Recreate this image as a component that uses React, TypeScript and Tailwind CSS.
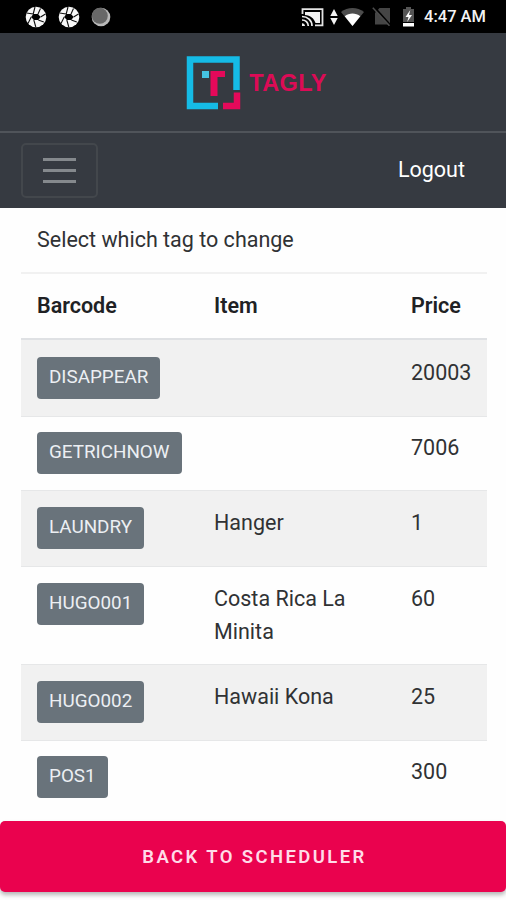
import { clsx } from "clsx";

type Tag = {
    barcode: string;
    item: string;
    price: string;
    height: string;
    pad: string;
};

const tags: Tag[] = [
    { barcode: "DISAPPEAR", item: "", price: "20003", height: "h-[77px]", pad: "pt-[16px]" },
    { barcode: "GETRICHNOW", item: "", price: "7006", height: "h-[74px]", pad: "pt-[14px]" },
    { barcode: "LAUNDRY", item: "Hanger", price: "1", height: "h-[76px]", pad: "pt-[15px]" },
    { barcode: "HUGO001", item: "Costa Rica La Minita", price: "60", height: "h-[98px]", pad: "pt-[15px]" },
    { barcode: "HUGO002", item: "Hawaii Kona", price: "25", height: "h-[76px]", pad: "pt-[15px]" },
    { barcode: "POS1", item: "", price: "300", height: "h-[80px]", pad: "pt-[14px]" },
];

const Aperture = () => (
    <svg className="h-[22px] w-[22px]" viewBox="0 0 22 22">
        <circle cx="11" cy="11" r="10.3" fill="#f7f7f7" />
        <path d="M8.200 8h4.800l2.600 3-2.300 3H8.800L6.200 11z" fill="#000" />
        <g stroke="#111" strokeWidth="1.100">
            <path d="M8.200 8L10 1M13 8L15.500 2.500M15.600 11L20.500 8M13.300 14l5.500 2M8.800 14l2 7M6.200 11L3 17.500M8.200 8L1.500 7" />
        </g>
    </svg>
);

const StatusBar = () => (
    <div className="flex h-[33px] items-center justify-between bg-black pr-[20px] pl-[25px]">
        <div className="flex items-center gap-[11px]">
            <Aperture />
            <Aperture />
            <svg className="h-[20px] w-[20px]" viewBox="0 0 20 20">
                <circle cx="10" cy="10" r="9.3" fill="#b9b9b9" />
                <circle cx="8.8" cy="8.8" r="8" fill="#686868" />
            </svg>
        </div>
        <div className="flex items-center">
            {/* Cast */}
            <svg className="mt-[2px] h-[19px] w-[23px]" viewBox="0 0 23 19" fill="none">
                <path d="M1.5 6V1.2h20v16.2H14" stroke="#e4e4e4" strokeWidth="1.8" />
                <path d="M4 4h15v11h-4.5C13 10.500 9.500 7.500 4 7z" fill="#f2f2f2" />
                <path d="M1 8.500c5.500 0 10 4 10 9.500M1 12c3.500 0 6.300 2.500 6.300 6" stroke="#efefef" strokeWidth="1.7" />
                <path d="M1 15.200c1.600 0 3 1.200 3 2.900H1z" fill="#efefef" />
            </svg>
            {/* Data arrows */}
            <svg className="ml-[6px] h-[16px] w-[8px]" viewBox="0 0 8 16" fill="#f2f2f2">
                <path d="M4 0l3.700 7H.3zM4 16L.3 9h7.400z" />
            </svg>
            {/* Wifi */}
            <svg className="ml-[3px] h-[18px] w-[23px]" viewBox="0 0 23 18">
                <path d="M11.500 18L0 4C6.500-1.200 16.500-1.200 23 4z" fill="#4c4c4c" />
                <path d="M11.500 18L3.700 8.200c4.500-3.500 11.100-3.500 15.600 0z" fill="#fff" />
            </svg>
            {/* No sim */}
            <svg className="ml-[8px] h-[19px] w-[20px]" viewBox="0 0 20 19">
                <path d="M7.500 1H18v16.500H3V6z" fill="#454545" />
                <path d="M2 0l16.500 18.500" stroke="#000" strokeWidth="2.200" />
                <path d="M.8.8l16.700 18" stroke="#4c4c4c" strokeWidth="1.500" />
            </svg>
            {/* Battery */}
            <svg className="ml-[10px] h-[20px] w-[13px]" viewBox="0 0 13 20">
                <path d="M4 0h5v2h3v13H1V2h3z" fill="#555" />
                <path d="M1 16h11v3.500H1z" fill="#fff" />
                <path d="M8.300 3L3.500 10h3l-1.300 5 4.800-7H7z" fill="#fff" />
            </svg>
            <span className="ml-[9px] pt-[2px] text-[16.500px] leading-none font-medium whitespace-nowrap text-[#f3f3f3]">
                4:47 AM
            </span>
        </div>
    </div>
);

const Logo = () => (
    <div className="flex items-center">
        <svg className="h-[54px] w-[55px]" viewBox="0 0 55 54" fill="none">
            <path d="M50.500 34V3.500H4V50h28" stroke="#15bbe6" strokeWidth="6.500" />
            <path d="M51 36.500V50H37" stroke="#e5095a" strokeWidth="6.500" />
            <path d="M16 15h7v7h-7z" fill="#45c3e2" />
            <path d="M24.500 15H39v6h-7.500v19h-7z" fill="#e5095a" />
        </svg>
        <span className="ml-[8px] pt-[2px] font-['Liberation_Sans',sans-serif] text-[23.500px] leading-none font-bold tracking-[0.4px] text-[#dc0b56]">
            TAGLY
        </span>
    </div>
);

const Navbar = () => (
    <nav className="bg-[#363a41] text-white">
        <div className="flex h-[100px] justify-center border-b-2 border-[#50545a] pt-[23px] pl-[7px]">
            <div className="flex h-[54px] items-center">
                <Logo />
            </div>
        </div>
        <div className="flex h-[75px] items-center justify-between pr-[41px] pb-[1px] pl-[21px]">
            <button className="flex h-[55px] w-[77px] flex-col items-center justify-center gap-[8px] rounded-[5px] border-2 border-[#43474c]">
                <span className="h-[3px] w-[33px] bg-[#85898d]" />
                <span className="h-[3px] w-[33px] bg-[#85898d]" />
                <span className="h-[3px] w-[33px] bg-[#85898d]" />
            </button>
            <a href="#" className="pb-[2px] text-[21.500px]">
                Logout
            </a>
        </div>
    </nav>
);

const TagTable = () => (
    <table className="w-[466px] table-fixed border-collapse text-left">
        <thead>
            <tr className="h-[66px] border-t-2 border-b-2 border-t-[#f1f1f1] border-b-[#dfe1e4] text-[#202124]">
                <th className="w-[177px] pb-[2px] pl-4 font-semibold">Barcode</th>
                <th className="w-[197px] pb-[2px] pl-4 font-semibold">Item</th>
                <th className="pb-[2px] pl-4 font-semibold">Price</th>
            </tr>
        </thead>
        <tbody>
            {tags.map((tag, i) => (
                <tr
                    key={tag.barcode}
                    className={clsx("border-t border-[#e6e7e8] align-top first:border-t-0", tag.height, i % 2 === 0 && "bg-[#f1f1f1]")}
                >
                    <td className={clsx("pl-4", tag.pad)}>
                        <button className="mt-px block h-[42px] rounded-[4px] bg-[#69737b] px-[12px] pb-px text-[18.850px] leading-none text-[#eceff3]">
                            {tag.barcode}
                        </button>
                    </td>
                    <td className={clsx("pr-4 pl-4", tag.pad)}>{tag.item}</td>
                    <td className={clsx("pl-4", tag.pad)}>{tag.price}</td>
                </tr>
            ))}
        </tbody>
    </table>
);

export default function App() {
    return (
        <div className="flex h-[900px] w-[506px] flex-col overflow-hidden bg-[#fefefe] font-[Roboto,sans-serif] text-[21.500px] leading-[33px] text-[#303234]">
            <StatusBar />
            <Navbar />
            <main className="h-[613px] shrink-0 overflow-hidden px-[21px]">
                <p className="h-[64px] pt-[15px] pl-4">Select which tag to change</p>
                <TagTable />
            </main>
            <button className="h-[71px] shrink-0 rounded-[5px] bg-[#ea024e] pt-[2px] pl-[3px] text-[18.500px] font-semibold tracking-[2.400px] text-[#ffdbe8] shadow-[0_3px_4px_rgba(0,0,0,0.28)]">
                BACK TO SCHEDULER
            </button>
        </div>
    );
}
